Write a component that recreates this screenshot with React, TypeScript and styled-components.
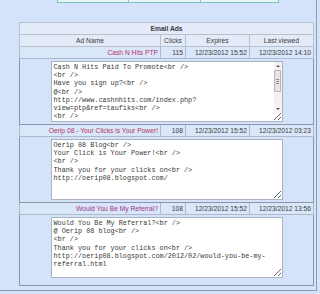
import React from 'react';
import styled, { createGlobalStyle } from 'styled-components';

const Global = createGlobalStyle`
  html, body { margin: 0; padding: 0; background: #d5e3fa; }
  body { width: 320px; height: 294px; overflow: hidden; }
`;

const Page = styled.div`
  width: 316px;
  height: 290px;
  border-right: 1px solid #8e9bb1;
  border-bottom: 1px solid #8e9bb1;
  background: #d5e3fa;
  overflow: hidden;
`;

const TopStrip = styled.div`
  margin-left: 57px;
  width: 220px;
  height: 2px;
  display: grid;
  grid-template-columns: 70px 72px 1fr;
  border: 1px solid #78c4c4;
  border-top: none;
`;

const TopCell = styled.div`
  background: #eaf4f6;
  & + & { border-left: 1px solid #9fb7c0; }
`;

const Table = styled.table`
  margin: 19px 0 0 19px;
  width: 295px;
  border-collapse: collapse;
  table-layout: fixed;
  font-family: "Liberation Sans", Arial, sans-serif;
  font-size: 6.7px;
  color: #3c3c3c;
  border: 1px solid #7f8898;
`;

const HeadCell = styled.th<{ $bold?: boolean }>`
  height: 11px;
  padding: 0;
  line-height: 11px;
  font-weight: ${(p) => (p.$bold ? 'bold' : 'normal')};
  text-align: center;
  background: #e3ebf8;
  border: 1px solid #b9c1cd;
  white-space: nowrap;
  overflow: hidden;
`;

const DataCell = styled.td<{ $color?: string }>`
  height: 11px;
  padding: 0 2px 0 0;
  line-height: 11px;
  text-align: right;
  background: #dae6fa;
  color: ${(p) => p.$color || '#3c3c3c'};
  border: 1px solid #b0b9c7;
  white-space: nowrap;
  overflow: hidden;
`;

const BodyCell = styled.td<{ $last?: boolean }>`
  padding: 2px 0 ${(p) => (p.$last ? '7px' : '2px')};
  background: #d5e3fa;
  border: 1px solid #8d96a5;
`;

const Field = styled.div`
  position: relative;
  width: 232px;
  margin: 0 auto;
`;

const Code = styled.textarea<{ $scroll?: boolean }>`
  display: block;
  box-sizing: border-box;
  width: 232px;
  height: 61px;
  padding: 1px ${(p) => (p.$scroll ? '10px' : '2px')} 1px 2px;
  border: 1px solid #a9b3c2;
  background: #fff;
  color: #3a3a3a;
  font-family: "Liberation Mono", "Courier New", monospace;
  font-size: 6.8px;
  line-height: 8.2px;
  resize: both;
  overflow: hidden;
  outline: none;
`;

const VBar = styled.div`
  position: absolute;
  top: 1px;
  right: 1px;
  bottom: 9px;
  width: 8px;
  display: flex;
  flex-direction: column;
  background: #f1f1f1;
`;

const Arrow = styled.div<{ $down?: boolean }>`
  height: 8px;
  display: flex;
  align-items: center;
  justify-content: center;
  background: #f3f3f3;
  &::before {
    content: '';
    width: 0;
    height: 0;
    border-left: 2px solid transparent;
    border-right: 2px solid transparent;
    ${(p) =>
      p.$down ? 'border-top: 2px solid #555;' : 'border-bottom: 2px solid #555;'}
  }
`;

const Thumb = styled.div`
  box-sizing: border-box;
  height: 22px;
  margin: 0 0.5px;
  border: 1px solid #b5b5b5;
  border-radius: 1px;
  background: #e6e6e6;
  display: flex;
  flex-direction: column;
  align-items: center;
  justify-content: center;
  gap: 1px;
  & > i {
    display: block;
    width: 3px;
    height: 1px;
    background: #8a8a8a;
  }
`;

const Track = styled.div`
  flex: 1;
`;

type Ad = {
  name: string;
  clicks: number;
  expires: string;
  last: string;
  color: string;
  body: string;
  scroll?: boolean;
};

const ads: Ad[] = [
  {
    name: 'Cash N Hits PTP',
    clicks: 115,
    expires: '12/23/2012 15:52',
    last: '12/23/2012 14:10',
    color: '#b5356a',
    scroll: true,
    body:
      'Cash N Hits Paid To Promote<br />\n<br />\nHave you sign up?<br />\n@<br />\nhttp://www.cashnhits.com/index.php?\nview=ptp&ref=taufiks<br />\n<br />\nThank you for your clicks on<br />\nhttp://oerip08.blogspot.com/\n<br />\nRegards,<br />\nOerip 08',
  },
  {
    name: 'Oerip 08 - Your Clicks is Your Power!',
    clicks: 108,
    expires: '12/23/2012 15:52',
    last: '12/23/2012 03:23',
    color: '#b3385f',
    body:
      'Oerip 08 Blog<br />\nYour Click is Your Power!<br />\n<br />\nThank you for your clicks on<br />\nhttp://oerip08.blogspot.com/',
  },
  {
    name: 'Would You Be My Referral?',
    clicks: 108,
    expires: '12/23/2012 15:52',
    last: '12/23/2012 13:56',
    color: '#9a3a86',
    body:
      'Would You Be My Referral?<br />\n@ Oerip 08 blog<br />\n<br />\nThank you for your clicks on<br />\nhttp://oerip08.blogspot.com/2012/02/would-you-be-my-referral.html',
  },
];

export default function App() {
  return (
    <>
      <Global />
      <Page>
        <TopStrip>
          <TopCell />
          <TopCell />
          <TopCell />
        </TopStrip>
        <Table>
          <colgroup>
            <col style={{ width: 141 }} />
            <col style={{ width: 25 }} />
            <col style={{ width: 64 }} />
            <col style={{ width: 64 }} />
          </colgroup>
          <thead>
            <tr>
              <HeadCell colSpan={4} $bold>
                Email Ads
              </HeadCell>
            </tr>
            <tr>
              <HeadCell>Ad Name</HeadCell>
              <HeadCell>Clicks</HeadCell>
              <HeadCell>Expires</HeadCell>
              <HeadCell>Last viewed</HeadCell>
            </tr>
          </thead>
          <tbody>
            {ads.map((ad, i) => (
              <React.Fragment key={ad.name}>
                <tr>
                  <DataCell $color={ad.color}>{ad.name}</DataCell>
                  <DataCell>{ad.clicks}</DataCell>
                  <DataCell>{ad.expires}</DataCell>
                  <DataCell>{ad.last}</DataCell>
                </tr>
                <tr>
                  <BodyCell colSpan={4} $last={i === ads.length - 1}>
                    <Field>
                      <Code
                        readOnly
                        defaultValue={ad.body}
                        spellCheck={false}
                        $scroll={ad.scroll}
                      />
                      {ad.scroll && (
                        <VBar>
                          <Arrow />
                          <Thumb>
                            <i />
                            <i />
                            <i />
                          </Thumb>
                          <Track />
                          <Arrow $down />
                        </VBar>
                      )}
                    </Field>
                  </BodyCell>
                </tr>
              </React.Fragment>
            ))}
          </tbody>
        </Table>
      </Page>
    </>
  );
}
